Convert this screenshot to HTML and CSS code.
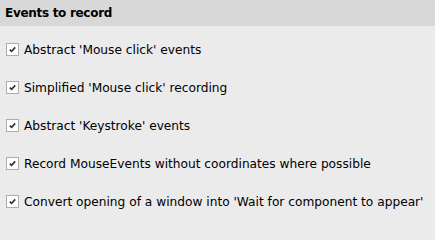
FILE: index.html
```html
<!DOCTYPE html>
<html>
<head>
<meta charset="utf-8">
<link rel="stylesheet" href="styles.css">
</head>
<body>
<div class="panel">
  <div class="header">Events to record</div>
  <div class="options">
    <label class="option"><span class="box"><svg viewBox="0 0 13 13" width="13" height="13"><path d="M3.8 6.6 L5.6 8.3 L9.2 4.4" fill="none" stroke="#333" stroke-width="1.7"/></svg></span>Abstract 'Mouse click' events</label>
    <label class="option"><span class="box"><svg viewBox="0 0 13 13" width="13" height="13"><path d="M3.8 6.6 L5.6 8.3 L9.2 4.4" fill="none" stroke="#333" stroke-width="1.7"/></svg></span>Simplified 'Mouse click' recording</label>
    <label class="option"><span class="box"><svg viewBox="0 0 13 13" width="13" height="13"><path d="M3.8 6.6 L5.6 8.3 L9.2 4.4" fill="none" stroke="#333" stroke-width="1.7"/></svg></span>Abstract 'Keystroke' events</label>
    <label class="option"><span class="box"><svg viewBox="0 0 13 13" width="13" height="13"><path d="M3.8 6.6 L5.6 8.3 L9.2 4.4" fill="none" stroke="#333" stroke-width="1.7"/></svg></span>Record MouseEvents without coordinates where possible</label>
    <label class="option"><span class="box"><svg viewBox="0 0 13 13" width="13" height="13"><path d="M3.8 6.6 L5.6 8.3 L9.2 4.4" fill="none" stroke="#333" stroke-width="1.7"/></svg></span>Convert opening of a window into 'Wait for component to appear'</label>
  </div>
</div>
</body>
</html>
```
FILE: styles.css
```css
html, body {
  margin: 0;
  padding: 0;
  background: #ebebeb;
  height: 226px;
  overflow: hidden;
}
.panel {
  width: 435px;
  height: 226px;
  background: #ebebeb;
  font-family: "DejaVu Sans", sans-serif;
  color: #000;
}
.header {
  height: 26px;
  background: #d8d8d8;
  box-sizing: border-box;
  padding: 5px 0 0 5px;
  font-weight: bold;
  font-size: 12px;
  letter-spacing: -0.3px;
  line-height: 16px;
}
.options {
  display: flex;
  flex-direction: column;
  padding-top: 14px;
  gap: 19px;
}
.option {
  display: flex;
  align-items: center;
  height: 19px;
  padding-left: 6px;
  font-size: 12.2px;
  white-space: nowrap;
}
.box {
  width: 13px;
  height: 13px;
  box-sizing: border-box;
  border: 1px solid #adadad;
  background: #fff;
  margin-right: 5px;
  display: flex;
  align-items: center;
  justify-content: center;
  flex: none;
}
.box svg {
  display: block;
  flex: none;
}
```
